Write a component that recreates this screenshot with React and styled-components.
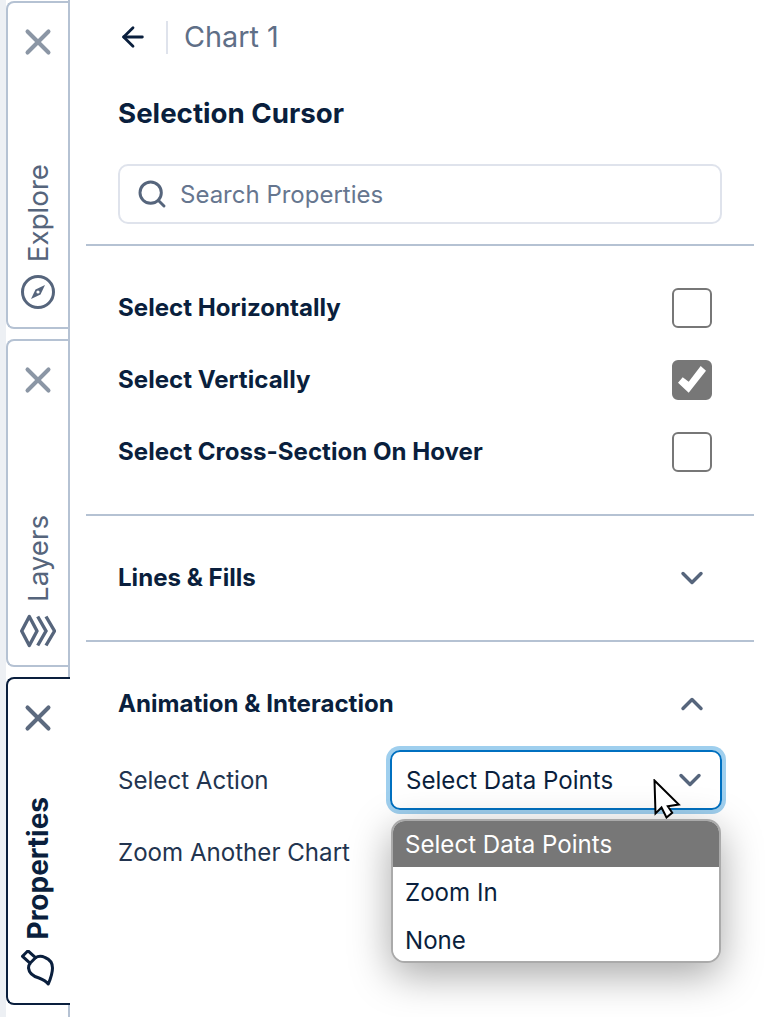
import styled, { createGlobalStyle } from "styled-components";
import { ArrowLeft, ChevronDown, ChevronUp, Search, X } from "lucide-react";

const GlobalStyle = createGlobalStyle`
  html, body {
    margin: 0;
    padding: 0;
    background: #fff;
  }
  body {
    font-family: Inter, "Liberation Sans", sans-serif;
    color: #0a1f3d;
  }
  * {
    box-sizing: border-box;
  }
`;

const Page = styled.div`
  display: flex;
  width: 765px;
  height: 1017px;
  overflow: hidden;
  background: #fff;
`;

const Sidebar = styled.nav`
  flex: none;
  width: 70px;
  height: 100%;
  padding: 1px 0 0 6px;
  display: flex;
  flex-direction: column;
  gap: 10px;
  background: linear-gradient(to right, #edf0f4 6px, #fff 6px);
  border-right: 2px solid #b5c2d3;
`;

const Tab = styled.div`
  flex: none;
  width: ${({ $active }) => ($active ? "64px" : "62px")};
  height: 328px;
  padding: 18px ${({ $active }) => ($active ? "2px" : "0")} 17px 0;
  display: flex;
  flex-direction: column;
  align-items: center;
  justify-content: space-between;
  background: #fff;
  border: 2px solid ${({ $active }) => ($active ? "#0a1f3d" : "#b5c2d3")};
  border-right: none;
  border-radius: 8px 0 0 8px;
`;

const TabClose = styled(X)`
  flex: none;
  width: 42px;
  height: 42px;
  color: ${({ $active }) => ($active ? "#5c6a7f" : "#8b96a5")};
`;

const TabLabel = styled.div`
  display: flex;
  flex-direction: column;
  align-items: center;
  gap: ${({ $active }) => ($active ? "10px" : "12px")};
`;

const TabText = styled.span`
  writing-mode: vertical-rl;
  transform: rotate(180deg);
  font-size: ${({ $active }) => ($active ? "28px" : "27.7px")};
  line-height: 32px;
  font-weight: ${({ $active }) => ($active ? 700 : 400)};
  color: ${({ $active }) => ($active ? "#0a1f3d" : "#56657c")};
`;

const Main = styled.main`
  flex: 1;
  min-width: 0;
  padding: 0 11px 0 16px;
`;

const Section = styled.section`
  padding: 0 32px;
  border-bottom: ${({ $last }) => ($last ? "none" : "2px solid #b5c2d3")};
`;

const TopSection = styled(Section)`
  height: 246px;
  padding-top: 17px;
`;

const Breadcrumb = styled.div`
  display: flex;
  align-items: center;
  height: 40px;
`;

const BackIcon = styled(ArrowLeft)`
  width: 32px;
  height: 32px;
  margin-left: -1px;
  color: #0a1f3d;
`;

const CrumbDivider = styled.span`
  width: 2px;
  height: 33px;
  margin: 0 16px 0 17px;
  background: #dfe3ec;
`;

const CrumbText = styled.span`
  margin-top: -2px;
  font-size: 28.8px;
  color: #5f6f87;
`;

const Title = styled.h1`
  margin: 40px 0 0;
  font-size: 27.7px;
  line-height: 32px;
  font-weight: 700;
  color: #0a1f3d;
`;

const SearchBox = styled.div`
  margin-top: 35px;
  height: 60px;
  padding: 0 14px 0 16px;
  display: flex;
  align-items: center;
  gap: 12px;
  border: 2px solid #dfe3ec;
  border-radius: 10px;
`;

const SearchIcon = styled(Search)`
  flex: none;
  width: 32px;
  height: 32px;
  color: #56657c;
`;

const SearchText = styled.span`
  font-size: 24px;
  color: #66768f;
`;

const OptionList = styled(Section)`
  height: 270px;
  padding-top: 26px;
`;

const OptionRow = styled.div`
  height: 72px;
  padding-right: 10px;
  display: flex;
  align-items: center;
  justify-content: space-between;
`;

const OptionName = styled.span`
  font-size: 24.1px;
  line-height: 30px;
  margin-top: -1px;
  font-weight: 700;
  color: #0a1f3d;
`;

const CheckBox = styled.span`
  flex: none;
  width: 40px;
  height: 40px;
  display: flex;
  align-items: center;
  justify-content: center;
  border: 2px solid #777;
  border-radius: 6px;
  background: ${({ $checked }) => ($checked ? "#777" : "#fff")};
`;

const CheckMark = styled.svg`
  flex: none;
`;

const GroupSection = styled(Section)`
  height: 126px;
  padding-top: 16px;
`;

const LastSection = styled(Section)`
  padding-top: 16px;
`;

const GroupHeader = styled.div`
  height: 92px;
  padding-right: 12px;
  display: flex;
  align-items: center;
  justify-content: space-between;
`;

const GroupChevron = styled.span`
  display: flex;
  color: #56657c;
`;

const FieldRow = styled.div`
  height: 60px;
  margin-bottom: 12px;
  display: flex;
  align-items: center;
  justify-content: space-between;
`;

const FieldName = styled.span`
  font-size: 24.1px;
  color: #22344f;
`;

const Dropdown = styled.div`
  position: relative;
  width: 332px;
  height: 60px;
  padding: 0 12px 0 14px;
  display: flex;
  align-items: center;
  justify-content: space-between;
  border: 2px solid #0070c0;
  border-radius: 10px;
  box-shadow: 0 0 0 4px #9fcfee;
  font-size: 24.1px;
  color: #0a1f3d;
`;

const DropdownMenu = styled.ul`
  position: absolute;
  z-index: 2;
  top: 67px;
  left: -1px;
  width: 330px;
  height: 144px;
  margin: 0;
  padding: 0;
  list-style: none;
  overflow: hidden;
  background: #fff;
  border: 2px solid #aaa;
  border-radius: 14px;
  box-shadow: 0 12px 40px rgba(0, 0, 0, 0.35);
`;

const MenuItem = styled.li`
  height: ${({ $selected }) => ($selected ? "46px" : "48px")};
  margin-bottom: ${({ $selected }) => ($selected ? "1px" : "0")};
  padding-left: 12px;
  display: flex;
  align-items: center;
  font-size: 24.1px;
  background: ${({ $selected }) => ($selected ? "#777" : "#fff")};
  color: ${({ $selected }) => ($selected ? "#fff" : "#0a1f3d")};
`;

const Pointer = styled.svg`
  position: absolute;
  z-index: 3;
  top: 27px;
  left: 261px;
`;

function CompassIcon() {
  return (
    <svg width="36" height="36" viewBox="0 0 36 36" fill="none">
      <circle cx="18" cy="18" r="15.500" stroke="#56657c" strokeWidth="3" />
      <path d="M25 11 20.500 20.500 11 25 15.500 15.500Z" fill="#56657c" />
      <circle cx="18" cy="18" r="1.600" fill="#fff" />
    </svg>
  );
}

function LayersIcon() {
  return (
    <svg width="36" height="34" viewBox="0 0 36 34" fill="none" stroke="#56657c" strokeWidth="3.400">
      <path d="M9.300 2.500 17 17 9.300 31.500 1.700 17Z" strokeLinejoin="round" />
      <path d="M17.700 2.500 26 17 17.700 31.500" />
      <path d="M26 2.500 34.500 17 26 31.500" />
    </svg>
  );
}

function BrushIcon() {
  return (
    <svg width="36" height="36" viewBox="0 2 36 36" fill="none" stroke="#0a1f3d" strokeWidth="3" strokeLinejoin="round">
      <path d="M2.500 8.300 8 2.800 15.500 9.700 10 15.200Z" />
      <path d="M15 10C18 8 22 8 25 9.500C30 11.500 32.500 15 32.500 20C32.500 26 30 32 28.300 36C26 33 23 31.500 19 30C14 28.500 9 25 8.500 20C8.400 18 9 16.500 10.500 15" />
    </svg>
  );
}

function TabItem({ name, icon, active }) {
  return (
    <Tab $active={active}>
      <TabClose $active={active} strokeWidth={2.3} />
      <TabLabel $active={active}>
        <TabText $active={active}>{name}</TabText>
        {icon}
      </TabLabel>
    </Tab>
  );
}

function Option({ name, checked }) {
  return (
    <OptionRow>
      <OptionName>{name}</OptionName>
      <CheckBox $checked={checked}>
        {checked && (
          <CheckMark width="40" height="40" viewBox="0 0 40 40">
            <path d="M6 22.700 16.700 32.700 34 10.700 28.700 6 16.700 21.700 10.700 17.300Z" fill="#fff" />
          </CheckMark>
        )}
      </CheckBox>
    </OptionRow>
  );
}

function App() {
  return (
    <Page>
      <GlobalStyle />
      <Sidebar>
        <TabItem name="Explore" icon={<CompassIcon />} />
        <TabItem name="Layers" icon={<LayersIcon />} />
        <TabItem name="Properties" icon={<BrushIcon />} active />
      </Sidebar>
      <Main>
        <TopSection>
          <Breadcrumb>
            <BackIcon strokeWidth={2.1} />
            <CrumbDivider />
            <CrumbText>Chart 1</CrumbText>
          </Breadcrumb>
          <Title>Selection Cursor</Title>
          <SearchBox>
            <SearchIcon strokeWidth={2.2} />
            <SearchText>Search Properties</SearchText>
          </SearchBox>
        </TopSection>
        <OptionList>
          <Option name="Select Horizontally" />
          <Option name="Select Vertically" checked />
          <Option name="Select Cross-Section On Hover" />
        </OptionList>
        <GroupSection>
          <GroupHeader>
            <OptionName>Lines &amp; Fills</OptionName>
            <GroupChevron>
              <ChevronDown size={36} strokeWidth={2.3} />
            </GroupChevron>
          </GroupHeader>
        </GroupSection>
        <LastSection $last>
          <GroupHeader>
            <OptionName>Animation &amp; Interaction</OptionName>
            <GroupChevron>
              <ChevronUp size={36} strokeWidth={2.3} />
            </GroupChevron>
          </GroupHeader>
          <FieldRow>
            <FieldName>Select Action</FieldName>
            <Dropdown>
              Select Data Points
              <GroupChevron>
                <ChevronDown size={36} strokeWidth={2.3} />
              </GroupChevron>
              <Pointer width="30" height="40" viewBox="0 0 30 40">
                <path d="M1.500 1.500 2.500 34.500 8.500 28.500 13.500 38.500 19.200 33.800 14.800 27.200 25.800 25.500Z" fill="#fff" stroke="#000" strokeWidth="2" />
              </Pointer>
              <DropdownMenu>
                <MenuItem $selected>Select Data Points</MenuItem>
                <MenuItem>Zoom In</MenuItem>
                <MenuItem>None</MenuItem>
              </DropdownMenu>
            </Dropdown>
          </FieldRow>
          <FieldRow>
            <FieldName>Zoom Another Chart</FieldName>
          </FieldRow>
        </LastSection>
      </Main>
    </Page>
  );
}

export default App;
